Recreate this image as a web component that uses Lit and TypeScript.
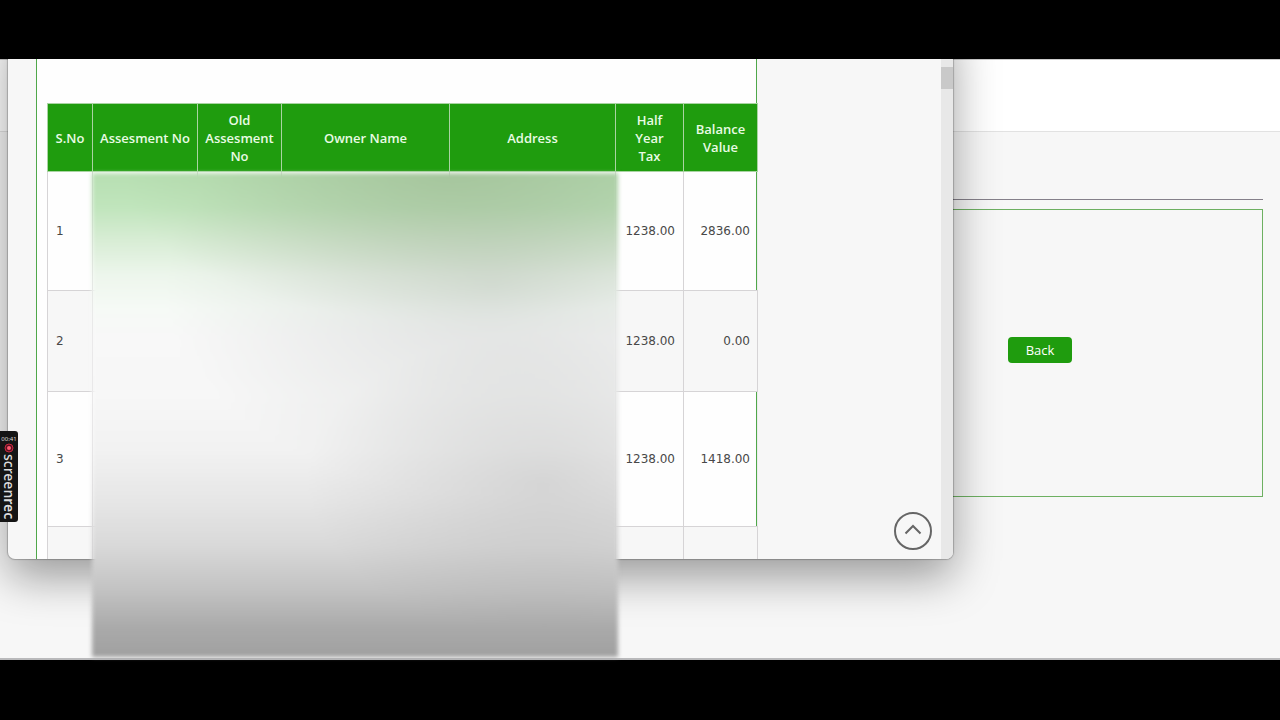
import { LitElement, html, css } from "lit";
import { customElement } from "lit/decorators.js";

interface Assessment {
  sno: string;
  tax: string;
  balance: string;
}

const ROWS: Assessment[] = [
  { sno: "1", tax: "1238.00", balance: "2836.00" },
  { sno: "2", tax: "1238.00", balance: "0.00" },
  { sno: "3", tax: "1238.00", balance: "1418.00" },
  { sno: "", tax: "", balance: "" },
];

const HEADS = ["S.No", "Assesment No", "Old\nAssesment\nNo", "Owner Name", "Address", "Half\nYear\nTax", "Balance\nValue"];

@customElement("assessment-table")
export class AssessmentTable extends LitElement {
  static styles = css`
    :host { display: block; }
    .grid {
      width: 100%;
      table-layout: fixed;
      border-collapse: collapse;
      font: 12px/18px "DejaVu Sans", sans-serif;
      color: #484848;
    }
    .c1 { width: 45px; }
    .c2 { width: 105px; }
    .c3 { width: 84px; }
    .c4 { width: 168px; }
    .c5 { width: 166px; }
    .c6 { width: 68px; }
    th {
      height: 67px;
      padding: 0;
      background: #1f9c0e;
      border: 1px solid #a9d4a2;
      color: #e9fbe4;
      font: 600 13px/18px "Open Sans", sans-serif;
      white-space: pre;
    }
    td {
      padding: 0 8px;
      border: 1px solid #d6d4d6;
      background: #fefefe;
    }
    .money { text-align: right; }
    .money:last-child { padding-right: 7px; }
    tr:nth-child(odd) .money:last-child {
      border-right-color: #ececec;
      box-shadow: inset -1px 0 #4fa84a;
    }
    tr:nth-child(even) td { background: #f7f7f7; }
    tr:nth-child(1) td { height: 118px; }
    tr:nth-child(2) td { height: 100px; }
    tr:nth-child(3) td { height: 134px; }
    tr:nth-child(4) td { height: 100px; }
  `;

  render() {
    return html`
      <table class="grid">
        <colgroup>
          <col class="c1" /><col class="c2" /><col class="c3" /><col class="c4" /><col class="c5" /><col class="c6" /><col />
        </colgroup>
        <thead>
          <tr>${HEADS.map((h) => html`<th scope="col">${h}</th>`)}</tr>
        </thead>
        <tbody>
          ${ROWS.map(
            (r) => html`<tr>
              <td>${r.sno}</td><td></td><td></td><td></td><td></td>
              <td class="money">${r.tax}</td>
              <td class="money">${r.balance}</td>
            </tr>`
          )}
        </tbody>
      </table>
    `;
  }
}

@customElement("app-root")
export class AppRoot extends LitElement {
  static styles = css`
    :host {
      display: grid;
      grid-template-rows: 59px 1fr 60px;
      height: 100vh;
      background: #000;
      font-family: "Noto Sans", sans-serif;
    }
    .stage {
      grid-row: 2;
      position: relative;
      display: flex;
      flex-direction: column;
      min-height: 0;
      background: #f7f7f7;
      border-bottom: 2px solid #b9b9bb;
      box-sizing: border-box;
    }
    .clip {
      flex: 1;
      display: flex;
      flex-direction: column;
      min-height: 0;
      position: relative;
      overflow: hidden;
    }
    .masthead {
      height: 73px;
      box-sizing: border-box;
      background: #fff;
      border-top: 1px solid #ccc;
      border-bottom: 1px solid #e2e2e2;
    }
    .rule {
      margin: 67px 17px 9px;
      border: 0;
      border-top: 1px solid #85808a;
    }
    .result {
      margin: 0 17px;
      height: 288px;
      box-sizing: border-box;
      border: 1px solid #6db061;
      display: flex;
      align-items: center;
      justify-content: flex-end;
      padding: 0 190px 6px 0;
    }
    .back {
      width: 64px;
      height: 26px;
      padding: 0;
      border: 0;
      border-radius: 4px;
      background: #1f9c0e;
      color: #fff;
      font: 13px/18px "Open Sans", sans-serif;
    }
    .window {
      position: absolute;
      left: 8px;
      top: -40px;
      width: 945px;
      height: 540px;
      padding-top: 40px;
      box-sizing: border-box;
      display: flex;
      overflow: hidden;
      background: #f7f7f7;
      border-radius: 0 0 7px 7px;
      box-shadow: 0 0 1px 1px rgba(0, 0, 0, 0.22), 0 18px 45px rgba(0, 0, 0, 0.38);
    }
    .view {
      flex: 1;
      display: flex;
      min-width: 0;
      padding-left: 28px;
    }
    .panel {
      width: 721px;
      height: 620px;
      box-sizing: border-box;
      padding: 44px 0 0 10px;
      background: #fefefe;
      border: 1px solid #4fa84a;
      border-width: 0 1px;
    }
    .list { margin-right: -2px; }
    .track {
      width: 12px;
      padding-top: 8px;
      background: #e8e8e8;
    }
    .thumb {
      height: 22px;
      background: #c9c9c9;
    }
    .totop {
      position: absolute;
      right: 21px;
      bottom: 9px;
      width: 38px;
      height: 38px;
      padding: 0;
      border: 0;
      background: none;
    }
    .totop svg { display: block; }
    .redaction {
      position: absolute;
      left: 92px;
      top: 114px;
      width: 526px;
      height: 484px;
      filter: blur(2px);
      background:
        radial-gradient(ellipse 330px 150px at 68% 0, rgba(140, 160, 120, 0.3), transparent),
        radial-gradient(ellipse 330px 210px at 76% 23%, rgba(110, 120, 115, 0.19), transparent),
        radial-gradient(ellipse 240px 150px at 86% 64%, rgba(90, 90, 90, 0.14), transparent),
        linear-gradient(#b7dfb2 0, #c0e5bc 7%, #d8edd5 14%, #edf6ec 21%, #f6faf6 28%, #f8f8f8 34%, #f7f7f7 46%, #f2f2f2 57%, #e6e6e6 68%, #d9d9d9 77%, #c3c3c3 86%, #aaa 94%, #a0a0a0 100%);
    }
    .recorder {
      position: absolute;
      left: 0;
      top: 372px;
      width: 18px;
      height: 91px;
      box-sizing: border-box;
      padding-top: 5px;
      display: flex;
      flex-direction: column;
      align-items: center;
      background: #151515;
      border-radius: 0 3px 3px 0;
      color: #ddd;
    }
    .time { font-size: 6px; line-height: 6px; }
    .brand {
      writing-mode: vertical-rl;
      font-size: 14px;
      line-height: 18px;
      font-weight: 500;
    }
    .strong { font-weight: 600; }
  `;

  render() {
    return html`
      <main class="stage">
        <div class="clip">
          <header class="masthead"></header>
          <hr class="rule" />
          <section class="result">
            <button class="back" type="button">Back</button>
          </section>
          <section class="window">
            <div class="view">
              <div class="panel"><assessment-table class="list"></assessment-table></div>
            </div>
            <div class="track"><div class="thumb"></div></div>
            <button class="totop" type="button" aria-label="Scroll to top">
              <svg width="38" height="38" viewBox="0 0 38 38" fill="none" stroke="#666">
                <circle cx="19" cy="19" r="18" stroke-width="2" />
                <path d="M11.500 21.500 19 14l7.500 7.500" stroke-width="2" />
              </svg>
            </button>
          </section>
        </div>
        <div class="redaction"></div>
        <aside class="recorder">
          <span class="time">00:41</span>
          <svg width="12" height="12" viewBox="0 0 12 12">
            <circle cx="6" cy="6" r="4" fill="#5a1020" stroke="#c8283f" />
            <circle cx="6" cy="6" r="2" fill="#ff5a70" />
          </svg>
          <span class="brand">screen<span class="strong">rec</span></span>
        </aside>
      </main>
    `;
  }
}
